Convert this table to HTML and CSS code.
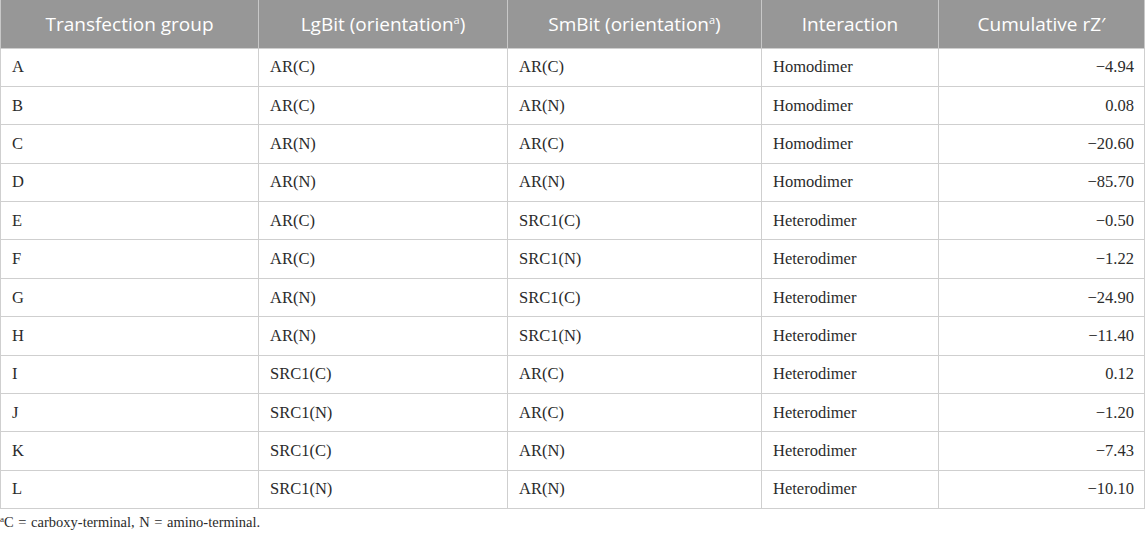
FILE: index.html
```html
<!DOCTYPE html>
<html>
<head>
<meta charset="utf-8">
<link rel="stylesheet" href="styles.css">
</head>
<body>
<div class="wrap">
<table class="data">
<colgroup>
<col class="c1"><col class="c2"><col class="c3"><col class="c4"><col class="c5">
</colgroup>
<thead>
<tr><th>Transfection group</th><th>LgBit (orientation<sup>a</sup>)</th><th>SmBit (orientation<sup>a</sup>)</th><th>Interaction</th><th>Cumulative rZ′</th></tr>
</thead>
<tbody>
<tr><td>A</td><td>AR(C)</td><td>AR(C)</td><td>Homodimer</td><td class="num">−4.94</td></tr>
<tr><td>B</td><td>AR(C)</td><td>AR(N)</td><td>Homodimer</td><td class="num">0.08</td></tr>
<tr><td>C</td><td>AR(N)</td><td>AR(C)</td><td>Homodimer</td><td class="num">−20.60</td></tr>
<tr><td>D</td><td>AR(N)</td><td>AR(N)</td><td>Homodimer</td><td class="num">−85.70</td></tr>
<tr><td>E</td><td>AR(C)</td><td>SRC1(C)</td><td>Heterodimer</td><td class="num">−0.50</td></tr>
<tr><td>F</td><td>AR(C)</td><td>SRC1(N)</td><td>Heterodimer</td><td class="num">−1.22</td></tr>
<tr><td>G</td><td>AR(N)</td><td>SRC1(C)</td><td>Heterodimer</td><td class="num">−24.90</td></tr>
<tr><td>H</td><td>AR(N)</td><td>SRC1(N)</td><td>Heterodimer</td><td class="num">−11.40</td></tr>
<tr><td>I</td><td>SRC1(C)</td><td>AR(C)</td><td>Heterodimer</td><td class="num">0.12</td></tr>
<tr><td>J</td><td>SRC1(N)</td><td>AR(C)</td><td>Heterodimer</td><td class="num">−1.20</td></tr>
<tr><td>K</td><td>SRC1(C)</td><td>AR(N)</td><td>Heterodimer</td><td class="num">−7.43</td></tr>
<tr><td>L</td><td>SRC1(N)</td><td>AR(N)</td><td>Heterodimer</td><td class="num">−10.10</td></tr>
</tbody>
</table>
<p class="foot"><sup>a</sup>C = carboxy-terminal, N = amino-terminal.</p>
</div>
</body>
</html>
```
FILE: styles.css
```css
html, body {
  margin: 0;
  padding: 0;
  background: #fff;
}
.wrap {
  width: 1144px;
}
.data {
  width: 1144px;
  border-collapse: collapse;
  table-layout: fixed;
}
.c1 { width: 258px; }
.c2 { width: 249px; }
.c3 { width: 254px; }
.c4 { width: 177px; }
.c5 { width: 206px; }
.data th {
  background: #979797;
  color: #fff;
  font-family: "Open Sans", "Noto Sans", sans-serif;
  font-weight: normal;
  font-size: 19px;
  height: 48px;
  padding: 0 10px;
  text-align: center;
  border-left: 1px solid #c8c8c8;
  border-right: 1px solid #c8c8c8;
  box-sizing: border-box;
}
.data th sup {
  font-size: 11px;
  vertical-align: 7px;
  line-height: 0;
}
.data td {
  font-family: "Liberation Serif", "Times New Roman", serif;
  font-size: 16.5px;
  color: #2b2b2b;
  height: 38.4px;
  padding: 0 11px;
  border: 1px solid #cfcfcf;
  box-sizing: border-box;
}
.data td.num {
  text-align: right;
  padding-right: 10px;
}
.foot {
  margin: 5px 0 0 0;
  font-family: "Liberation Serif", "Times New Roman", serif;
  font-size: 14.5px;
  word-spacing: 1px;
  color: #2b2b2b;
}
.foot sup {
  font-size: 9px;
  vertical-align: 5px;
  line-height: 0;
}
```
